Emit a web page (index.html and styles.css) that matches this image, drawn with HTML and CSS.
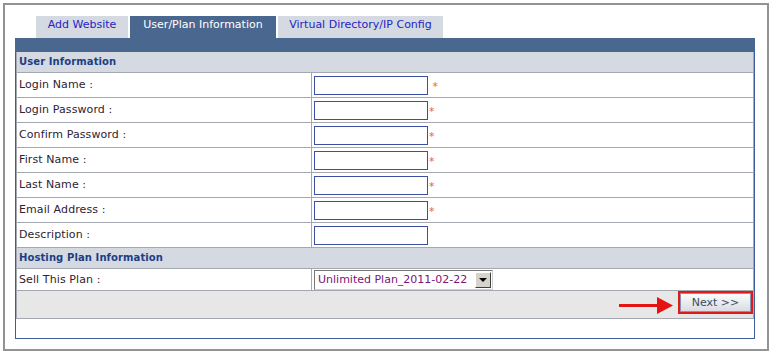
FILE: index.html
```html
<!DOCTYPE html>
<html lang="en">
<head>
  <meta charset="UTF-8">
  <title>Add Website - User/Plan Information</title>
  <link rel="stylesheet" href="styles.css">
</head>
<body>
  <div class="frame">
    <ul class="tabs">
      <li class="tab tab-add">Add Website</li>
      <li class="tab tab-user active">User/Plan Information</li>
      <li class="tab tab-vdir">Virtual Directory/IP Config</li>
    </ul>

    <div class="panel">
      <div class="panel-bar"></div>

      <form class="grid" id="userForm">
        <div class="section">User Information</div>

        <div class="row">
          <label class="label" for="loginName">Login Name :</label>
          <div class="field"><input type="text" class="text" id="loginName">&nbsp;<span class="req">*</span></div>
        </div>
        <div class="row">
          <label class="label" for="loginPass">Login Password :</label>
          <div class="field"><input type="password" class="text" id="loginPass"><span class="req">*</span></div>
        </div>
        <div class="row">
          <label class="label" for="confirmPass">Confirm Password :</label>
          <div class="field"><input type="password" class="text" id="confirmPass"><span class="req">*</span></div>
        </div>
        <div class="row">
          <label class="label" for="firstName">First Name :</label>
          <div class="field"><input type="text" class="text" id="firstName"><span class="req">*</span></div>
        </div>
        <div class="row">
          <label class="label" for="lastName">Last Name :</label>
          <div class="field"><input type="text" class="text" id="lastName"><span class="req">*</span></div>
        </div>
        <div class="row">
          <label class="label" for="email">Email Address :</label>
          <div class="field"><input type="text" class="text" id="email"><span class="req">*</span></div>
        </div>
        <div class="row">
          <label class="label" for="description">Description :</label>
          <div class="field"><input type="text" class="text" id="description"></div>
        </div>

        <div class="section">Hosting Plan Information</div>

        <div class="row row-plan">
          <label class="label" for="plan">Sell This Plan :</label>
          <div class="field">
            <div class="select">
              <select id="plan">
                <option>Unlimited Plan_2011-02-22</option>
              </select>
              <span class="select-btn"><span class="caret"></span></span>
            </div>
          </div>
        </div>

        <div class="footer">
          <!-- seta vermelha apontando para o botao -->
          <svg class="arrow" width="54" height="17" viewBox="0 0 54 17">
            <rect x="0" y="7" width="42" height="3" fill="#e41414"/>
            <polygon points="38,0 54,8.5 38,17" fill="#e41414"/>
          </svg>
          <button type="submit" class="next">Next &gt;&gt;</button>
        </div>
      </form>
    </div>
  </div>
</body>
</html>
```

FILE: styles.css
```css
* {
  box-sizing: border-box;
}

body {
  margin: 0;
  background-color: #fff;
  font-family: 'DejaVu Sans', Verdana, sans-serif;
  font-size: 11px;
}

.frame {
  margin: 3px 1px 0 3px;
  height: 348px;
  border: 2px solid #939393;
  padding: 11px 0 0 10px;
}

.tabs {
  list-style: none;
  margin: 0 0 0 21px;
  padding: 0;
  display: flex;
  gap: 2px;
}

.tab {
  height: 22px;
  line-height: 18px;
  padding-bottom: 4px;
  text-align: center;
  background-color: #d5d9e2;
  color: #2424c4;
  white-space: nowrap;
}

.tab-add { width: 92px; }
.tab-user { width: 146px; }
.tab-vdir { width: 165px; }

.tab.active {
  background-color: #4a6790;
  color: #fff;
}

.panel {
  width: 740px;
  height: 301px;
  border: 1px solid #3f5c9b;
  border-top: none;
}

.panel-bar {
  height: 14px;
  margin: 0 -1px;
  background-color: #4a6790;
}

.grid {
  margin: 0;
  border-left: 1px solid #a3a8b1;
  border-right: 1px solid #a3a8b1;
}

.section {
  height: 21px;
  line-height: 20px;
  padding-left: 2px;
  background-color: #d5d9e2;
  border-bottom: 1px solid #a3a8b1;
  color: #1c3e84;
  font-size: 10px;
  font-weight: bold;
  letter-spacing: 0.1px;
}

.row {
  display: grid;
  grid-template-columns: 295px 1fr;
  height: 25px;
  border-bottom: 1px solid #a3a8b1;
}

.row-plan {
  height: 22px;
}

.label {
  line-height: 24px;
  padding-left: 2px;
  border-right: 1px solid #a3a8b1;
  color: #2e2331;
  letter-spacing: 0.1px;
}

.row-plan .label {
  line-height: 21px;
}

.field {
  display: flex;
  align-items: center;
  padding-left: 2px;
}

.text {
  width: 114px;
  height: 19px;
  margin: 0;
  padding: 1px 2px;
  border: 1px solid #3c4fa2;
  font: inherit;
}

.req {
  color: #f2622c;
  line-height: 1;
  margin-left: 1px;
  margin-top: 3px;
}

.select {
  display: flex;
  width: 179px;
  height: 20px;
  border: 1px solid #777;
  border-right-color: #d0d0d0;
  border-bottom-color: #d0d0d0;
  background-color: #fff;
}

.select select {
  flex: 1;
  min-width: 0;
  border: none;
  padding: 0 0 0 3px;
  margin: 0;
  appearance: none;
  background: transparent;
  color: #7a1478;
  font: inherit;
  outline: none;
}

.select-btn {
  width: 16px;
  height: 16px;
  margin: 1px 1px 0 0;
  display: flex;
  align-items: center;
  justify-content: center;
  background-color: #d6d3cc;
  border: 1px solid #fff;
  border-right-color: #404040;
  border-bottom-color: #404040;
}

.caret {
  width: 0;
  height: 0;
  border-left: 4px solid transparent;
  border-right: 4px solid transparent;
  border-top: 4px solid #000;
  margin-top: 1px;
}

.footer {
  height: 28px;
  display: flex;
  justify-content: flex-end;
  align-items: flex-start;
  background-color: #e7e7e7;
  border-bottom: 1px solid #a3a8b1;
}

.arrow {
  margin-top: 6px;
  margin-right: 5px;
}

.next {
  width: 75px;
  height: 23px;
  margin: 0;
  padding: 0;
  border: 2px solid #e2191b;
  box-shadow: inset 0 0 0 1px #8794ad;
  background: linear-gradient(#fdfdfd, #d6dbe1);
  color: #3e4a5b;
  font: inherit;
  cursor: pointer;
}
```
